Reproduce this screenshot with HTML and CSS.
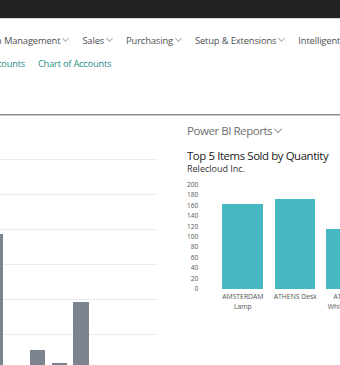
FILE: index.html
```html
<!DOCTYPE html>
<html>
<head>
<meta charset="utf-8">
<link rel="stylesheet" href="styles.css">
</head>
<body>
<div class="page">
  <div class="topbar"></div>
  <nav class="nav">
    <span class="nav-item first">n Management<span class="chev"></span></span>
    <span class="nav-item">Sales<span class="chev"></span></span>
    <span class="nav-item">Purchasing<span class="chev"></span></span>
    <span class="nav-item">Setup &amp; Extensions<span class="chev"></span></span>
    <span class="nav-item">Intelligent Cloud</span>
  </nav>
  <div class="links">
    <a class="link first">counts</a>
    <a class="link">Chart of Accounts</a>
  </div>
  <div class="sep"></div>
  <main class="main">
    <section class="left">
      <svg class="left-chart" width="170" height="249" viewBox="0 0 170 249">
        <g stroke="#ececec" stroke-width="1">
          <line x1="0" y1="43.5" x2="157" y2="43.5"/>
          <line x1="0" y1="78.5" x2="157" y2="78.5"/>
          <line x1="0" y1="113.5" x2="157" y2="113.5"/>
          <line x1="0" y1="148.5" x2="157" y2="148.5"/>
          <line x1="0" y1="183.5" x2="157" y2="183.5"/>
          <line x1="0" y1="218.5" x2="157" y2="218.5"/>
        </g>
        <g fill="#7b838e">
          <rect x="-12" y="118" width="15" height="140"/>
          <rect x="30" y="234" width="15" height="20"/>
          <rect x="52" y="247" width="15" height="10"/>
          <rect x="73" y="186" width="16" height="70"/>
        </g>
      </svg>
    </section>
    <section class="right">
      <div class="pbi">Power BI Reports<span class="chev big"></span></div>
      <div class="title">Top 5 Items Sold by Quantity</div>
      <div class="subtitle">Relecloud Inc.</div>
      <div class="chart">
        <div class="axis">
          <span>200</span><span>180</span><span>160</span><span>140</span><span>120</span>
          <span>100</span><span>80</span><span>60</span><span>40</span><span>20</span><span>0</span>
        </div>
        <div class="cols">
          <div class="col c1">
            <div class="plot"><div class="bar" style="height:85px"></div></div>
            <div class="lbl">AMSTERDAM<br>Lamp</div>
          </div>
          <div class="col c2">
            <div class="plot"><div class="bar" style="height:90px"></div></div>
            <div class="lbl">ATHENS Desk</div>
          </div>
          <div class="col c3">
            <div class="plot"><div class="bar" style="height:60px"></div></div>
            <div class="lbl">ATHENS<br>Whiteboard<br>l</div>
          </div>
        </div>
      </div>
    </section>
  </main>
</div>
</body>
</html>
```

FILE: styles.css
```css
* { box-sizing: border-box; }
html, body { margin: 0; padding: 0; background: #fff; }
body {
  width: 340px;
  height: 365px;
  overflow: hidden;
  font-family: "Open Sans", "Noto Sans", sans-serif;
}
.page { width: 340px; height: 365px; overflow: hidden; }
.topbar {
  height: 19px;
  background: #222222;
  border-bottom: 1px solid #d8d8d8;
}
.nav {
  display: flex;
  white-space: nowrap;
  height: 22px;
  margin-top: 10px;
  align-items: center;
  font-size: 9.4px;
  color: #505050;
  letter-spacing: -0.15px;
}
.nav-item { display: inline-flex; align-items: center; margin-right: 14px; flex: none; }
.nav-item.first { margin-left: -4px; }
.chev {
  display: inline-block;
  width: 5px;
  height: 5px;
  border-right: 1px solid #b0b0b0;
  border-bottom: 1px solid #b0b0b0;
  transform: rotate(45deg);
  margin-left: 3px;
  margin-top: -3px;
}
.chev.big { width: 6px; height: 6px; border-color: #999; margin-left: 3px; margin-top: -4px; }
.links {
  display: flex;
  height: 20px;
  align-items: center;
  margin-top: 2px;
  font-size: 9.4px;
  color: #2a8d8a;
  white-space: nowrap;
  letter-spacing: -0.25px;
}
.link { margin-right: 13px; flex: none; }
.link.first { margin-left: -3px; }
.sep {
  margin-top: 41px;
  height: 2px;
  border-top: 1px solid #8a8a8a;
  border-bottom: 1px solid #c8c8c8;
}
.main { display: flex; height: 250px; }
.left { width: 187px; flex: none; }
.left-chart { display: block; overflow: visible; }
.right { flex: 1; padding-top: 7px; overflow: hidden; }
.pbi {
  font-size: 11.5px;
  color: #6e6e6e;
  line-height: 16px;
  display: flex;
  align-items: center;
  letter-spacing: -0.45px;
}
.title {
  margin-top: 10px;
  font-size: 11.4px;
  color: #202020;
  line-height: 14px;
  white-space: nowrap;
  letter-spacing: -0.4px;
}
.subtitle {
  font-size: 9px;
  color: #333;
  line-height: 12px;
}
.chart { display: flex; margin-top: 5px; }
.axis {
  width: 13px;
  display: flex;
  flex-direction: column;
  align-items: flex-end;
  font-size: 6.6px;
  color: #555;
  line-height: 10.4px;
}
.cols { display: flex; margin-left: 24px; white-space: nowrap; }
.col { display: flex; flex-direction: column; align-items: center; flex: none; }
.col.c1 { width: 41px; }
.col.c2 { width: 40px; margin-left: 12px; }
.col.c3 { width: 40px; margin-left: 11px; }
.plot { height: 109px; display: flex; align-items: flex-end; width: 100%; }
.bar { width: 100%; background: #46b8c1; }
.lbl {
  margin-top: 3px;
  font-size: 6.8px;
  color: #555;
  line-height: 10px;
  text-align: center;
}
```
